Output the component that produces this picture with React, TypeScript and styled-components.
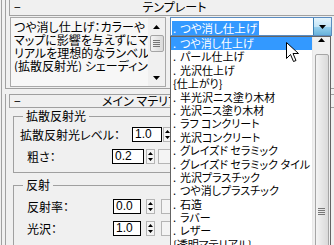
import React from 'react';
import styled, { createGlobalStyle } from 'styled-components';

const Global = createGlobalStyle`
  html, body {
    margin: 0;
    padding: 0;
    background: #f0f0f0;
  }
  body {
    font-family: "Noto Sans CJK JP", "Noto Sans", sans-serif;
    font-size: 12px;
    color: #000;
    font-feature-settings: "palt";
  }
`;

const Screen = styled.div`
  position: relative;
  width: 334px;
  height: 245px;
  overflow: hidden;
  background: #f0f0f0;
  display: flex;
`;

const Edge = styled.div`
  flex: none;
  width: 3px;
  margin-left: 1px;
  border-left: 1px solid #a0a0a0;
`;

const Column = styled.div`
  flex: none;
  width: 334px;
  display: flex;
  flex-direction: column;
`;

const Rollout = styled.div<{ $gap?: number }>`
  margin-top: ${p => p.$gap ?? 0}px;
  border-left: 1px solid #a0a0a0;
  border-bottom: 1px solid #a0a0a0;
`;

const Header = styled.div<{ $h: number; $top?: number }>`
  box-sizing: border-box;
  height: ${p => p.$h}px;
  margin: ${p => p.$top ?? 0}px 0 0 3px;
  border: 1px solid #a0a0a0;
  border-right: none;
  display: flex;
  align-items: center;
  line-height: 12px;
  white-space: nowrap;
`;

const Collapse = styled.span`
  width: 20px;
  padding-left: 4px;
  box-sizing: border-box;
`;

const Title = styled.span`
  flex: 1;
  text-align: center;
  padding-right: 20px;
`;

const TemplateBody = styled.div`
  display: flex;
  align-items: flex-start;
  gap: 4px;
  padding: 1px 0 1px 4px;
`;

const TextBox = styled.div`
  box-sizing: border-box;
  width: 156px;
  height: 70px;
  border: 1px solid #a9a9a9;
  background: #f7f7f7;
  display: flex;
`;

const TextLines = styled.div`
  flex: 1;
  padding: 2px 0 0 3px;
  line-height: 13px;
  overflow: hidden;
`;

const Line = styled.div`
  white-space: nowrap;
  overflow: hidden;
`;

const VScroll = styled.div`
  width: 17px;
  display: flex;
  flex-direction: column;
  align-items: center;
  background: #f0f0f0;
`;

const ArrowBtn = styled.div<{ $h: number }>`
  height: ${p => p.$h}px;
  display: flex;
  align-items: center;
  justify-content: center;
`;

const Thumb = styled.div<{ $h: number }>`
  box-sizing: border-box;
  width: 14px;
  height: ${p => p.$h}px;
  border: 1px solid #a5a5a5;
  border-radius: 2px;
  background: linear-gradient(90deg, #f4f4f4, #e6e6e6 50%, #dadada);
  display: flex;
  align-items: center;
  justify-content: center;
`;

const Combo = styled.div`
  box-sizing: border-box;
  width: 162px;
  height: 19px;
  border: 1px solid #5b8cc0;
  background: #fff;
  display: flex;
`;

const ComboText = styled.div`
  flex: 1;
  padding: 1px 0 0 1px;
`;

const Selected = styled.span`
  display: inline-block;
  height: 14px;
  line-height: 14px;
  padding: 0 2px 0 1px;
  background: #3399ff;
  color: #fff;
  font-size: 11.5px;
`;

const ComboButton = styled.div`
  width: 17px;
  border-left: 1px solid #3c7fb1;
  background: linear-gradient(#e5f4fc, #c4e5f6 50%, #98d1ef 51%, #68b3db);
  display: flex;
  align-items: center;
  justify-content: center;
`;

const Group = styled.fieldset<{ $top: number }>`
  width: 300px;
  margin: ${p => p.$top}px 0 0 7px;
  padding: 0;
  border: 1px solid #a0a0a0;
  min-width: 0;
`;

const Legend = styled.legend`
  margin-left: 9px;
  padding: 0 3px;
  line-height: 14px;
`;

const Rows = styled.div<{ $pt: number; $pb: number }>`
  display: flex;
  flex-direction: column;
  gap: 7px;
  padding: ${p => p.$pt}px 0 ${p => p.$pb}px 0;
`;

const Row = styled.div<{ $indent: number }>`
  display: flex;
  align-items: center;
  height: 15px;
  padding-left: ${p => p.$indent}px;
`;

const Label = styled.span<{ $w: number }>`
  width: ${p => p.$w}px;
  flex: none;
  white-space: nowrap;
`;

const Field = styled.div<{ $w: number }>`
  box-sizing: border-box;
  width: ${p => p.$w}px;
  height: 15px;
  flex: none;
  border: 1px solid #000;
  background: #fff;
  padding-left: 2px;
  line-height: 13px;
  font-family: "Liberation Sans", sans-serif;
  font-size: 12px;
`;

const Spin = styled.div<{ $gap: number }>`
  box-sizing: border-box;
  width: 9px;
  height: 15px;
  flex: none;
  margin-left: ${p => p.$gap}px;
  border: 1px solid #b5b5b5;
  background: #f4f4f4;
  display: flex;
  align-items: center;
  justify-content: center;
`;

const Flat = styled.div<{ $gap: number }>`
  box-sizing: border-box;
  width: 16px;
  height: 15px;
  flex: none;
  margin-left: ${p => p.$gap}px;
  border: 1px solid #b5b5b5;
  background: #f4f4f4;
`;

const List = styled.div`
  position: absolute;
  left: 170px;
  top: 36px;
  width: 161px;
  height: 230px;
  box-sizing: border-box;
  border: 1px solid #646464;
  background: #fff;
  display: flex;
  font-size: 11px;
`;

const Items = styled.div`
  flex: 1;
  overflow: hidden;
`;

const Item = styled.div<{ $active?: boolean }>`
  height: 13.4px;
  line-height: 13.4px;
  padding-left: 2px;
  white-space: nowrap;
  background: ${p => (p.$active ? '#3399ff' : 'transparent')};
  color: ${p => (p.$active ? '#fff' : '#000')};
`;

const Dot = styled.span`
  display: inline-block;
  width: 7px;
`;

const ListScroll = styled.div`
  width: 17px;
  display: flex;
  flex-direction: column;
  align-items: center;
  background: #f0f0f0;
  border-left: 1px solid #e8e8e8;
`;

const Cursor = styled.svg`
  position: absolute;
  left: 286px;
  top: 42px;
`;

const Up = () => (
  <svg width="7" height="4" viewBox="0 0 7 4">
    <path d="M3.5 0 L7 4 L0 4 Z" fill="#000" />
  </svg>
);

const Down = () => (
  <svg width="7" height="4" viewBox="0 0 7 4">
    <path d="M0 0 L7 0 L3.5 4 Z" fill="#000" />
  </svg>
);

const Grip = () => (
  <svg width="7" height="7" viewBox="0 0 7 7">
    <path d="M0 0.5 H7 M0 2.5 H7 M0 4.5 H7 M0 6.5 H7" stroke="#777" strokeWidth="1" />
  </svg>
);

const SpinArrows = () => (
  <svg width="5" height="11" viewBox="0 0 5 11">
    <path d="M2.5 1 L5 4 L0 4 Z M0 7 L5 7 L2.5 10 Z" fill="#000" />
  </svg>
);

const materials: { text: string; bullet: boolean }[] = [
  { text: 'つや消し仕上げ', bullet: true },
  { text: 'パール仕上げ', bullet: true },
  { text: '光沢仕上げ', bullet: true },
  { text: '{仕上がり}', bullet: false },
  { text: '半光沢ニス塗り木材', bullet: true },
  { text: '光沢ニス塗り木材', bullet: true },
  { text: 'ラフ コンクリート', bullet: true },
  { text: '光沢コンクリート', bullet: true },
  { text: 'グレイズド セラミック', bullet: true },
  { text: 'グレイズド セラミック タイル', bullet: true },
  { text: '光沢プラスチック', bullet: true },
  { text: 'つや消しプラスチック', bullet: true },
  { text: '石造', bullet: true },
  { text: 'ラバー', bullet: true },
  { text: 'レザー', bullet: true },
  { text: '{透明マテリアル}', bullet: false },
];

export default function App() {
  return (
    <Screen>
      <Global />
      <Edge />
      <Column>
        <Rollout>
          <Header $h={18} $top={-2}>
            <Collapse>−</Collapse>
            <Title>テンプレート</Title>
          </Header>
          <TemplateBody>
            <TextBox>
              <TextLines>
                <Line>つや消し仕上げ：カラーや</Line>
                <Line>マップに影響を与えずにマテ</Line>
                <Line>リアルを理想的なランベルト</Line>
                <Line>(拡散反射光) シェーディン</Line>
              </TextLines>
              <VScroll>
                <ArrowBtn $h={17}><Up /></ArrowBtn>
                <Thumb $h={17}><Grip /></Thumb>
                <ArrowBtn $h={16} style={{ marginTop: 'auto' }}><Down /></ArrowBtn>
              </VScroll>
            </TextBox>
            <Combo>
              <ComboText>
                <Selected><Dot>.</Dot>つや消し仕上げ</Selected>
              </ComboText>
              <ComboButton><Down /></ComboButton>
            </Combo>
          </TemplateBody>
        </Rollout>

        <Rollout $gap={5}>
          <Header $h={14}>
            <Collapse>−</Collapse>
            <Title>メイン マテリアル パラメータ</Title>
          </Header>
          <Group $top={1}>
            <Legend>拡散反射光</Legend>
            <Rows $pt={4} $pb={8}>
              <Row $indent={6}>
                <Label $w={112}>拡散反射光レベル：</Label>
                <Field $w={30}>1.0</Field>
                <Spin $gap={1}><SpinArrows /></Spin>
              </Row>
              <Row $indent={13}>
                <Label $w={85}>粗さ：</Label>
                <Field $w={32}>0.2</Field>
                <Spin $gap={2}><SpinArrows /></Spin>
                <Flat $gap={3} />
              </Row>
            </Rows>
          </Group>
          <Group $top={5}>
            <Legend>反射</Legend>
            <Rows $pt={7} $pb={12}>
              <Row $indent={13}>
                <Label $w={86}>反射率：</Label>
                <Field $w={28}>0.0</Field>
                <Spin $gap={5}><SpinArrows /></Spin>
                <Flat $gap={6} />
              </Row>
              <Row $indent={13}>
                <Label $w={86}>光沢：</Label>
                <Field $w={28}>1.0</Field>
                <Spin $gap={5}><SpinArrows /></Spin>
                <Flat $gap={6} />
              </Row>
            </Rows>
          </Group>
        </Rollout>
      </Column>

      <List>
        <Items>
          {materials.map((m, i) => (
            <Item key={m.text} $active={i === 0}>
              {m.bullet && <Dot>.</Dot>}
              {m.text}
            </Item>
          ))}
        </Items>
        <ListScroll>
          <ArrowBtn $h={20}><Up /></ArrowBtn>
          <Thumb $h={320} style={{ marginTop: 10, alignItems: 'flex-start', paddingTop: 153 }}>
            <Grip />
          </Thumb>
        </ListScroll>
      </List>

      <Cursor width="13" height="20" viewBox="0 0 13 20">
        <path d="M0.5 0.5 L0.5 16.5 L4.5 12.5 L7.5 19.5 L10 18.5 L7 11.5 L12.5 11.5 Z" fill="#fff" stroke="#000" strokeWidth="1" />
      </Cursor>
    </Screen>
  );
}
